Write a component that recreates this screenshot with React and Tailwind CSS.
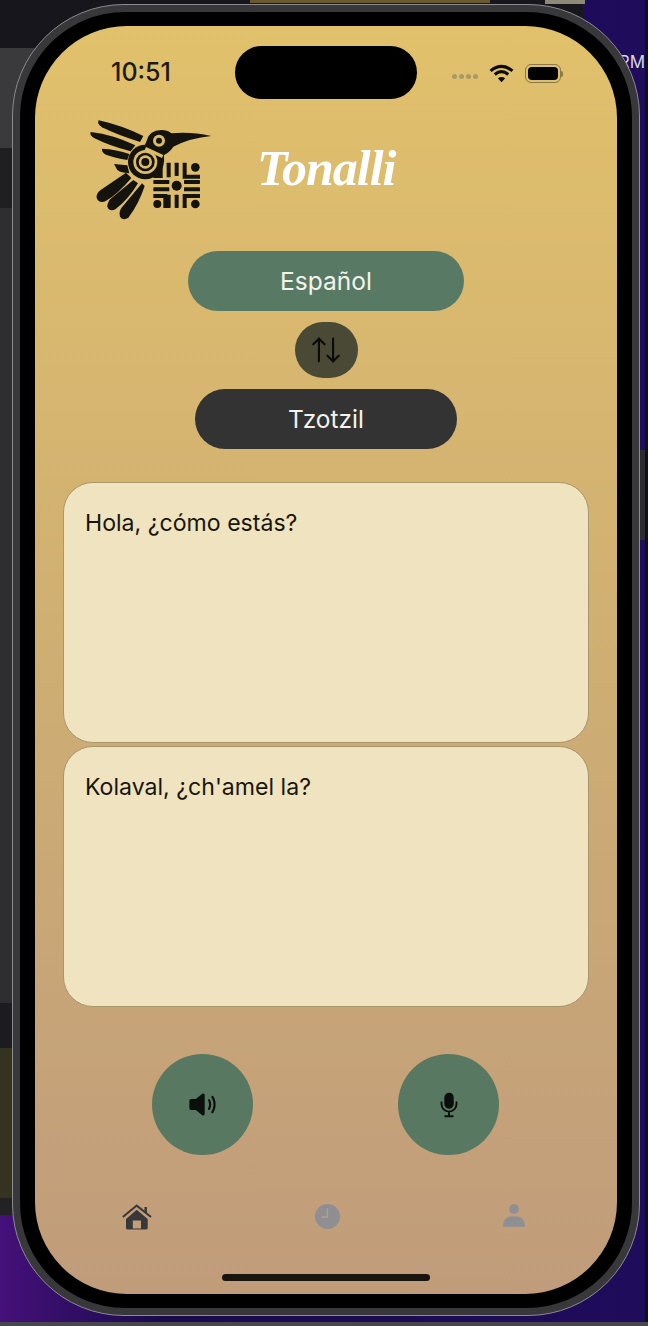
import { ArrowUpDown } from "lucide-react";
import { IoMic, IoVolumeMedium } from "react-icons/io5";

function Logo() {
  return (
    <svg viewBox="0 0 420 345" className="h-[115px] w-[140px]" fill="#15130e">
      {/* wing */}
      <path d="M56 31 Q125 46 190 78 L180 96 Q110 74 66 52 Q50 42 56 31Z" />
      <path d="M32 66 Q100 74 166 106 L152 124 Q90 108 42 84 Q28 76 32 66Z" />
      <path d="M66 116 Q110 118 148 132 L142 150 Q105 144 78 134 Q64 126 66 116Z" />
      <path d="M102 162 L142 166 L148 190 Q122 188 112 180Z" />
      {/* tail */}
      <path d="M138 188 L154 204 Q114 252 76 274 Q56 280 50 264 Q48 250 62 240Z" />
      <path d="M160 210 L174 220 Q144 270 106 298 Q88 306 82 290 Q82 276 92 266Z" />
      <path d="M186 220 L194 228 Q176 282 146 322 Q130 334 120 320 Q116 306 124 294Z" />
      {/* head and beak */}
      <path d="M200 92 Q208 60 244 60 Q262 60 274 70 Q330 64 394 78 Q330 84 280 110 Q268 130 240 140 L190 116Z" />
      <circle cx="237" cy="92" r="18" fill="#dcbc6b" />
      <circle cx="237" cy="92" r="9" />
      {/* body */}
      <circle cx="196" cy="156" r="52" />
      <path d="M204 108 Q232 114 252 134 Q256 170 234 200 L214 198 Q240 166 230 140 Q216 124 198 118Z" />
      <path d="M198 111 L250 135 L246 144 L194 120Z" fill="#dcbc6b" />
      <circle cx="196" cy="156" r="36" fill="#dcbc6b" />
      <circle cx="196" cy="156" r="28" />
      <circle cx="196" cy="156" r="20" fill="#dcbc6b" />
      <circle cx="196" cy="156" r="12" />
      {/* pattern */}
      <circle cx="290" cy="227" r="15" />
      <rect x="220" y="210" width="48" height="12" rx="2" />
      <rect x="220" y="232" width="48" height="12" rx="2" />
      <rect x="312" y="210" width="48" height="12" rx="2" />
      <rect x="312" y="232" width="48" height="12" rx="2" />
      <rect x="260" y="158" width="12" height="44" rx="2" />
      <rect x="284" y="158" width="12" height="40" rx="2" />
      <rect x="260" y="254" width="12" height="40" rx="2" />
      <rect x="284" y="254" width="12" height="40" rx="2" />
      <path d="M308 158 h12 v36 h40 v12 h-52z" />
      <path d="M236 170 h12 v34 h-28 v-12 h16z" />
      <circle cx="346" cy="172" r="13" />
      <path d="M308 294 h12 v-30 h40 v-12 h-52z" />
      <path d="M220 252 h42 v42 h-12 v-30 h-30z" />
      <circle cx="232" cy="282" r="12" />
      <circle cx="346" cy="282" r="13" />
    </svg>
  );
}

function HomeIcon() {
  return (
    <svg viewBox="0 0 30 26" className="h-[26px] w-[30px]" fill="#38383a">
      <path d="M0.8 13 L14.7 1.6 L29 13" fill="none" stroke="#38383a" strokeWidth="2" />
      <rect x="22.5" y="3" width="2.4" height="6" />
      <path
        fillRule="evenodd"
        d="M4 15 L14.7 5.8 L25.7 15 V24 Q25.7 25.6 24 25.6 H5.7 Q4 25.6 4 24Z M10.8 16.5 V24.4 H19 V16.5Z"
      />
    </svg>
  );
}

function ClockIcon() {
  return (
    <svg viewBox="0 0 25 25" className="h-[25px] w-[25px]">
      <circle cx="12.5" cy="12.5" r="12.5" fill="#8e8e93" />
      <path d="M12.5 4.5 V13 H6.5" fill="none" stroke="#b5a187" strokeWidth="1.3" />
    </svg>
  );
}

function PersonIcon() {
  return (
    <svg viewBox="0 0 22 23" className="h-[23px] w-[22px]" fill="#8e8e93">
      <circle cx="11" cy="5" r="4.8" />
      <path d="M0 22.8 Q0.8 13.6 7 12.6 H15 Q21.2 13.6 22 22.8Z" />
    </svg>
  );
}

function StatusBar() {
  return (
    <div className="flex h-[73px] items-end">
      <span className="w-[200px] pb-[11px] pl-[76px] text-[25px] leading-[32px] font-medium text-[#1d1a12]">10:51</span>
      <div className="h-[53px] w-[182px] rounded-full bg-black" />
      <div className="flex flex-1 items-center pb-[16px] pl-[35px]">
        <div className="flex gap-[2px] pt-[6px]">
          <i className="h-[5px] w-[5px] rounded-full bg-[#a89a66]" />
          <i className="h-[5px] w-[5px] rounded-full bg-[#a89a66]" />
          <i className="h-[5px] w-[5px] rounded-full bg-[#a89a66]" />
          <i className="h-[5px] w-[5px] rounded-full bg-[#a89a66]" />
        </div>
        <svg viewBox="0 0 24 18" className="ml-[11px] h-[19px] w-[25px]" fill="none" stroke="#0c0b08" strokeWidth="3">
          <path d="M1.5 6.5 Q12 -2 22.5 6.5" />
          <path d="M5.5 10 Q12 4.5 18.5 10" />
          <path d="M12 17.5 L8.5 13.5 Q12 11 15.5 13.5Z" fill="#0c0b08" stroke="none" />
        </svg>
        <div className="ml-[11px] flex h-[19px] w-[36px] items-center rounded-[6px] border border-[#8a7a45] p-[2px]">
          <div className="h-full w-full rounded-[4px] bg-black" />
        </div>
        <div className="h-[6px] w-[2px] rounded-r-full bg-[#8a7a45]" />
      </div>
    </div>
  );
}

function TextCard({ text }) {
  return (
    <div className="h-[261px] rounded-[30px] border border-[#a8966c] bg-[#f0e3bf] px-[21px] py-[23px] text-[23.1px] leading-[34px] text-[#17150f]">
      {text}
    </div>
  );
}

function RoundButton({ children }) {
  return (
    <button className="flex h-[101px] w-[101px] items-center justify-center rounded-full bg-[#587862] text-[#0b0f0c]">
      {children}
    </button>
  );
}

function Backdrop() {
  return (
    <>
      {/* desktop behind the simulator */}
      <div className="absolute top-0 left-0 flex h-[1215px] w-[40px] flex-col bg-[#2e2e31]">
        <div className="h-[48px] bg-[#17161c]" />
        <div className="h-[100px] bg-[#3a3a3c]" />
        <div className="h-[60px] bg-[#1f1f22]" />
        <div className="flex-1" />
        <div className="h-[45px] bg-[#1c1b20]" />
        <div className="h-[150px] bg-[#35321f]" />
        <div className="h-[17px] bg-[#222225]" />
      </div>
      <div className="absolute top-0 left-0 h-[48px] w-[583px] bg-[#17161c]" />
      <div className="absolute top-0 left-[250px] h-[3px] w-[240px] bg-[#6b5a30]" />
      <div className="absolute top-0 left-[545px] h-[4px] w-[40px] bg-[#8e8a78]" />
      <span className="absolute top-[50px] right-[3px] text-[17px] text-[#d8d8e0]">RM</span>
      <div className="absolute top-[450px] right-[3px] h-[90px] w-[5px] bg-[#2c2c30]" />
      <div className="absolute top-0 right-0 h-[1326px] w-[3px] bg-[#111114]" />
      <div className="absolute bottom-0 left-0 h-[4px] w-[648px] bg-[#48484c]" />
    </>
  );
}

export default function App() {
  return (
    <div className="relative h-[1326px] w-[648px] overflow-hidden bg-gradient-to-r from-[#45107a] via-[#190a4c] via-25% to-[#1f0c5c] font-['Inter',sans-serif]">
      <Backdrop />

      <div className="relative mt-[4px] ml-[12px] h-[1312px] w-[628px] rounded-[112px] border border-[#8b8b90] bg-[#38383a] p-[7px]">
        <div className="h-full w-full rounded-[105px] bg-black px-[15px] py-[14px]">
          <div className="flex h-[1268px] w-[582px] flex-col rounded-[92px] bg-gradient-to-b from-[#e1c16b] via-[#cfae73] to-[#c09c7b]">
            <StatusBar />

            <header className="flex h-[152px] items-center pt-[11px] pb-[26px] pl-[45px]">
              <Logo />
              <span className="ml-[37px] font-['Liberation_Serif',serif] text-[50px] leading-[60px] font-bold tracking-[-1px] text-white italic">
                Tonalli
              </span>
            </header>

            <div className="flex flex-col items-center text-[24.5px] text-[#f3f3ec]">
              <button className="h-[60px] w-[276px] rounded-[30px] bg-[#587a64]">Español</button>
              <button className="mt-[11px] flex h-[56px] w-[63px] items-center justify-center rounded-[28px] bg-[#4a4936] text-[#0b0b08]">
                <ArrowUpDown size={34} strokeWidth={1.5} />
              </button>
              <button className="mt-[11px] h-[60px] w-[262px] rounded-[30px] bg-[#333333]">Tzotzil</button>
            </div>

            <div className="mt-[33px] flex flex-col gap-[3px] px-[28px]">
              <TextCard text="Hola, ¿cómo estás?" />
              <TextCard text="Kolaval, ¿ch'amel la?" />
            </div>

            <div className="mt-[47px] flex justify-between pr-[118px] pl-[117px]">
              <RoundButton>
                <IoVolumeMedium className="h-[35px] w-[35px]" />
              </RoundButton>
              <RoundButton>
                <IoMic className="h-[30px] w-[30px]" />
              </RoundButton>
            </div>

            <nav className="mt-[49px] flex items-start justify-between pr-[92px] pl-[87px]">
              <HomeIcon />
              <ClockIcon />
              <PersonIcon />
            </nav>

            <div className="mx-auto mt-[44px] h-[7px] w-[208px] rounded-full bg-[#1a140e]" />
          </div>
        </div>
      </div>
    </div>
  );
}
